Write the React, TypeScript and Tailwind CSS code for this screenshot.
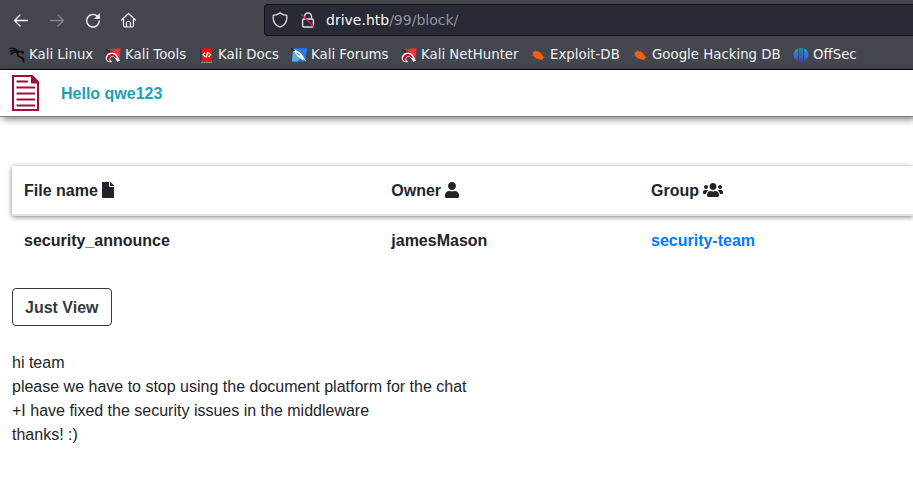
import React from "react";
import { FaFile, FaUser, FaUsers } from "react-icons/fa";

function Dragon() {
  return (
    <svg className="h-4 w-4" viewBox="0 0 16 16" fill="none" stroke="#08090b">
      <path d="M0.5 1.500C4 .8 7 1.500 9.300 4.200" strokeWidth="1.100" />
      <path d="M1 4.500C4 2.800 7 3 9.300 4.600L13.800 4.800L14.800 6.200" strokeWidth="1.500" />
      <path d="M1.500 7.500C4 5 7 4.600 9.500 5C7.800 6.500 8 8.500 10 9.500C13 10.300 14.600 12 14.800 15.500" strokeWidth="1.700" />
      <path d="M12 5.500L14 7.200M12 10L15.500 12" strokeWidth="1" />
    </svg>
  );
}

function Magnet() {
  return (
    <svg className="h-4 w-4" viewBox="0 0 16 16">
      <path d="M2.500 2.300L15.800 1.300L14 13L8 9Z" fill="#f5343a" />
      <path d="M2.500 3L7 4.500L5 6.500ZM6 4L11 7" stroke="#5c1a23" strokeWidth=".8" fill="#44262d" />
      <path d="M7.500 15C3 16 .5 14 .8 10.700C1.200 7 5 5 8.500 5.700C12 6.400 12.800 9.500 15.300 14L12.800 15.200L10 11.200C8.500 9 5.800 9.800 5.300 11.700C5 13 6 14 7.500 15Z" fill="#f4f2f3" />
      <path d="M5 14.500C2.600 14.500 1.600 13 2 11C2.600 8.200 5.500 6.700 8 7.200C10 7.600 10.800 9 11.700 10.500L10.700 11C9 8.500 6 8.700 4.900 10.500C4.200 11.900 4.300 13.200 5 14.500Z" fill="#c80c2b" />
      <path d="M0 1L3.500 3.200L2 4Z" fill="#24252a" />
      <path d="M13 15.200L15.500 14.200" stroke="#161820" />
    </svg>
  );
}

function Docs() {
  return (
    <svg className="h-4 w-4" viewBox="0 0 16 16">
      <path d="M2 1H4V15H2Z" fill="#173967" />
      <path d="M3.500 1H14V15H3.500Z" fill="#e4110d" />
      <path d="M3 15.300H14" stroke="#bbb" strokeWidth=".7" />
      <path d="M7 5.500L5.200 7.700L7.500 10M10.500 5.500L12.500 7.700L10.500 10M9.600 5L8.300 10.500" stroke="#fff" strokeWidth="1.200" fill="none" />
    </svg>
  );
}

function Forums() {
  return (
    <svg className="h-4 w-4" viewBox="0 0 16 16">
      <path d="M2.500 1.300H16L14.500 14.500H1Z" fill="#2878f4" />
      <path d="M2 4L9 10L7 14.500H1Z" fill="#55adf2" />
      <path d="M.8 2.300L4 2.500L9.500 5.700L12 9L15.500 15L10.500 12.300L6.500 9.500L4 6Z" fill="#f4f5f7" />
      <path d="M0 1L4 3.300L2 4ZM5.500 5.500L9 8.500M12 12.500L15.500 15.500" fill="#17191e" stroke="#17191e" strokeWidth=".6" />
    </svg>
  );
}

function Exploit() {
  return (
    <svg className="h-4 w-4" viewBox="0 0 16 16">
      <path d="M1 4L5 6M4 2L7 5M8 3L9 6M0 9L5 8M3 13L7 10M9 11L9 14M11 6L14 6M12 10L15.500 10M12 11L13 14" stroke="#8d533c" strokeWidth=".7" />
      <path d="M2.500 6L5 4L8.500 4.400L11 6.200L12.500 8.700L14.500 10.300L12.800 11.400L12 13L9.500 12.300L6 11.400L3.500 9Z" fill="#ef600f" />
    </svg>
  );
}

function OffSec() {
  return (
    <svg className="h-4 w-4" viewBox="0 0 16 16">
      <defs>
        <linearGradient id="offsec" gradientUnits="userSpaceOnUse" x1="0" y1="0" x2="0" y2="16">
          <stop stopColor="#10a6bd" />
          <stop offset=".5" stopColor="#2d79d1" />
          <stop offset="1" stopColor="#5a26df" />
        </linearGradient>
      </defs>
      <path d="M5 1.300V14.200C2.500 13.300.5 11 .5 7.800S2.500 2.200 5 1.300ZM11 1.300V14.200C13.500 13.300 15.500 11 15.500 7.800S13.500 2.200 11 1.300ZM6.200 1H7.700V15.500L6.200 14.500ZM8.300 1H9.800V14.500L8.300 15.500Z" fill="url(#offsec)" />
    </svg>
  );
}

const bookmarks = [
  { label: "Kali Linux", Icon: Dragon, width: "w-[96px]" },
  { label: "Kali Tools", Icon: Magnet, width: "w-[93px]" },
  { label: "Kali Docs", Icon: Docs, width: "w-[93px]" },
  { label: "Kali Forums", Icon: Forums, width: "w-[110px]" },
  { label: "Kali NetHunter", Icon: Magnet, width: "w-[129px]" },
  { label: "Exploit-DB", Icon: Exploit, width: "w-[102px]" },
  { label: "Google Hacking DB", Icon: Exploit, width: "w-[161px]" },
  { label: "OffSec", Icon: OffSec, width: "w-[80px]" },
];

function BrowserChrome() {
  return (
    <div className="h-[70px] border-b border-[#0c0c0d] bg-[#44464d] font-['DejaVu_Sans',sans-serif] text-[#f0f0f1]">
      <div className="flex h-10 items-center pl-[13px]">
        <svg className="mr-5 h-4 w-4" viewBox="0 0 16 16" fill="none" stroke="#f5f5f6" strokeWidth="1.300" strokeLinecap="round" strokeLinejoin="round">
          <path d="M14.500 8.500H1.500M7 3L1.500 8.500L7 14" />
        </svg>
        <svg className="mr-5 h-4 w-4" viewBox="0 0 16 16" fill="none" stroke="#85868b" strokeWidth="1.300" strokeLinecap="round" strokeLinejoin="round">
          <path d="M1.500 8.500H14.500M9 3L14.500 8.500L9 14" />
        </svg>
        <svg className="mr-5 h-4 w-4" viewBox="0 0 16 16" fill="none" stroke="#f5f5f6" strokeWidth="1.400" strokeLinecap="round">
          <path d="M12.500 4.300A6.300 6.300 0 1 0 14.300 9" />
          <path d="M14.500 2V6.500H10Z" fill="#f5f5f6" strokeWidth=".7" strokeLinejoin="round" />
        </svg>
        <svg className="mr-[127px] h-4 w-4" viewBox="0 0 16 16" fill="none" stroke="#f5f5f6" strokeWidth="1.200" strokeLinecap="round" strokeLinejoin="round">
          <path d="M.6 8L7.500 1.500L14.400 8M2.500 7V13.500Q2.500 15 4 15H11Q12.500 15 12.500 13.500V7M5.500 15V10.500Q5.500 9.500 6.500 9.500H8.500Q9.500 9.500 9.500 10.500V15" />
        </svg>
        <div className="flex h-8 flex-1 items-center rounded-l border border-r-0 border-[#111217] bg-[#282a36] pl-[7px]">
          <svg className="mr-3 h-4 w-4" viewBox="0 0 16 16" fill="none" stroke="#dededf" strokeWidth="1.300" strokeLinejoin="round">
            <path d="M8 .8C6 2.500 3.500 3.200 1.200 3.300C.7 9 3 13.500 8 15.200C13 13.500 15.300 9 14.800 3.300C12.500 3.200 10 2.500 8 .8Z" />
          </svg>
          <svg className="mr-2.5 h-4 w-4" viewBox="0 0 16 16" fill="none" stroke="#dededf" strokeWidth="1.400">
            <path d="M4.500 7V4.500A3.500 3.500 0 0 1 11.500 4.500V7" />
            <rect x="2.600" y="7" width="10.800" height="8" rx="1.500" />
            <path d="M1 2L14.500 15.500" stroke="#e21b44" strokeWidth="1.400" />
          </svg>
          <span className="whitespace-pre text-[14px] leading-5 text-[#fbfbfb]">drive.htb<span className="text-[#93949b]">/99/block/</span></span>
        </div>
      </div>
      <div className="flex h-[29px] items-center pl-[9px] text-[13.330px]">
        {bookmarks.map(({ label, Icon, width }) => (
          <div key={label} className={`flex shrink-0 items-center gap-1 whitespace-nowrap ${width}`}>
            <Icon />
            <span>{label}</span>
          </div>
        ))}
      </div>
    </div>
  );
}

export default function App() {
  return (
    <div className="h-[479px] w-[913px] overflow-hidden bg-white font-['Liberation_Sans',Arial,sans-serif] text-base leading-6 text-[#212529]">
      <BrowserChrome />
      <header className="flex h-[46px] items-center pl-3 shadow-[0_1px_0_#808080,3px_3px_7px_rgba(0,0,0,0.55)]">
        <svg className="mr-[21px] h-9 w-7" viewBox="0 0 28 36" fill="none">
          <path d="M1 1H20L26 8V35H1Z" stroke="#a60a38" strokeWidth="2" />
          <path d="M19 0H20.500L27 6.500V8.500H19Z" fill="#a60a38" />
          <path d="M4.500 6.500H16M4.500 12.500H23M4.500 18.500H23M4.500 24.500H23M4.500 30.500H23" stroke="#a60a38" strokeWidth="1.900" />
        </svg>
        <b className="pt-0.5 text-[#17a2b8]">Hello qwe123</b>
      </header>
      <main className="pl-3 pt-[50px]">
        <div className="font-bold">
          <div className="flex h-[50px] border-b-2 border-[#dee2e6] pl-3 pt-[13px] shadow-[0_1px_5px_rgba(0,0,0,0.5)]">
            <div className="flex w-[367.300px]">File name<FaFile className="ml-1 mt-[3px] h-4 w-3" /></div>
            <div className="flex w-[259.700px]">Owner<FaUser className="ml-1 mt-[3px] h-4 w-3.5" /></div>
            <div className="flex">Group<FaUsers className="ml-1 mt-[3px] h-4 w-5" /></div>
          </div>
          <div className="flex h-12 pl-3 pt-[13px]">
            <div className="w-[367.300px]">security_announce</div>
            <div className="w-[259.700px]">jamesMason</div>
            <a className="text-[#007bff]">security-team</a>
          </div>
        </div>
        <button className="mt-6 block h-[38px] w-[100px] rounded border border-[#343a40] pl-3 pt-0.5 text-left font-bold text-[#343a40]">Just View</button>
        <p className="mt-[25px] whitespace-pre-line">{"hi team\nplease we have to stop using the document platform for the chat\n+I have fixed the security issues in the middleware\nthanks! :)"}</p>
      </main>
    </div>
  );
}
